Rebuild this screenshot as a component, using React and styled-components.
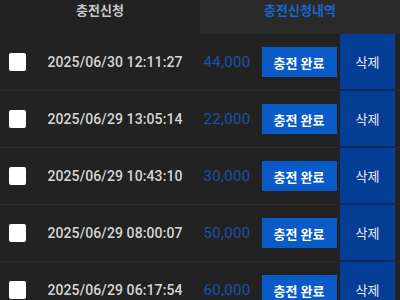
import React from 'react'
import styled, { createGlobalStyle } from 'styled-components'

const Global = createGlobalStyle`
  html, body { margin: 0; padding: 0; background: #222222; }
  body { font-family: "Noto Sans CJK KR", "Noto Sans", sans-serif; overflow: hidden; }
`

const Page = styled.div`
  width: 400px;
  height: 300px;
  background: #222222;
  overflow: hidden;
`

const Tabs = styled.div`
  display: flex;
  height: 34px;
`

const Tab = styled.div`
  flex: 1;
  display: flex;
  justify-content: center;
  font-size: 13px;
  font-weight: 700;
  color: ${p => (p.active ? '#1766cf' : '#c9c9c9')};
  background: ${p => (p.active ? '#2a2a2a' : '#222222')};
`

const Row = styled.div`
  display: flex;
  align-items: stretch;
  height: 56px;
  border-bottom: 1px solid #2c2c2c;
`

const CheckCell = styled.div`
  width: 34px;
  display: flex;
  align-items: center;
  justify-content: center;
`

const Check = styled.span`
  width: 17px;
  height: 18px;
  background: #ffffff;
  border-radius: 2px;
`

const Date = styled.div`
  width: 162px;
  display: flex;
  align-items: center;
  justify-content: center;
  font-family: Roboto, "Liberation Sans", sans-serif;
  font-size: 14px;
  font-weight: 500;
  color: #d6d6d6;
  letter-spacing: 0.1px;
`

const Amount = styled.div`
  width: 62px;
  display: flex;
  align-items: center;
  justify-content: center;
  font-family: Roboto, "Liberation Sans", sans-serif;
  font-size: 15px;
  letter-spacing: 0.3px;
  color: #1b52ab;
`

const BtnCell = styled.div`
  width: 82px;
  display: flex;
  align-items: center;
  justify-content: center;
`

const DoneBtn = styled.button`
  width: 75px;
  height: 30px;
  border: none;
  background: #0a5bc8;
  color: #ffffff;
  font-family: "Noto Sans CJK KR", sans-serif;
  font-size: 13px;
  font-weight: 700;
  padding: 0;
`

const Delete = styled.div`
  width: 55px;
  display: flex;
  align-items: center;
  justify-content: center;
  background: #073e95;
  color: #e6ecf7;
  font-size: 13px;
  border-bottom: 2px solid #0a2a5c;
  margin-bottom: -1px;
`

const rows = [
  ['2025/06/30 12:11:27', '44,000'],
  ['2025/06/29 13:05:14', '22,000'],
  ['2025/06/29 10:43:10', '30,000'],
  ['2025/06/29 08:00:07', '50,000'],
  ['2025/06/29 06:17:54', '60,000'],
]

export default function App() {
  return (
    <Page>
      <Global />
      <Tabs>
        <Tab>충전신청</Tab>
        <Tab active>충전신청내역</Tab>
      </Tabs>
      {rows.map(([d, a]) => (
        <Row key={d}>
          <CheckCell><Check /></CheckCell>
          <Date>{d}</Date>
          <Amount>{a}</Amount>
          <BtnCell><DoneBtn>충전 완료</DoneBtn></BtnCell>
          <Delete>삭제</Delete>
        </Row>
      ))}
    </Page>
  )
}
